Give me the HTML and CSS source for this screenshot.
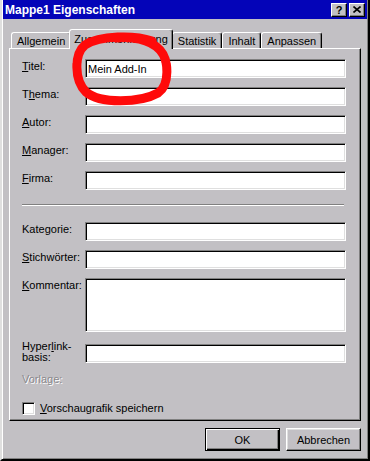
FILE: index.html
```html
<!DOCTYPE html>
<html lang="de">
<head>
    <meta charset="UTF-8">
    <meta name="viewport" content="width=device-width, initial-scale=1.0">
    <title>Mappe1 Eigenschaften</title>
    <link rel="stylesheet" href="styles.css">
</head>
<body>
    <div class="window">
        <div class="titlebar">
            <span class="title">Mappe1 Eigenschaften</span>
            <div class="title-buttons">
                <button class="title-btn">?</button>
                <button class="title-btn">
                    <svg width="8" height="7" viewBox="0 0 8 7"><path d="M0.5 0.5 L7.5 6.5 M7.5 0.5 L0.5 6.5" stroke="#000" stroke-width="1.6" fill="none"/></svg>
                </button>
            </div>
        </div>
        <div class="dialog-body">
            <div class="tabs">
                <div class="tab">Allgemein</div>
                <div class="tab active">Zusammenfassung</div>
                <div class="tab">Statistik</div>
                <div class="tab">Inhalt</div>
                <div class="tab">Anpassen</div>
            </div>
            <div class="panel">
                <div class="field">
                    <label for="titel"><u>T</u>itel:</label>
                    <input type="text" id="titel" value="Mein Add-In">
                </div>
                <div class="field">
                    <label for="thema">T<u>h</u>ema:</label>
                    <input type="text" id="thema">
                </div>
                <div class="field">
                    <label for="autor"><u>A</u>utor:</label>
                    <input type="text" id="autor">
                </div>
                <div class="field">
                    <label for="manager"><u>M</u>anager:</label>
                    <input type="text" id="manager">
                </div>
                <div class="field">
                    <label for="firma"><u>F</u>irma:</label>
                    <input type="text" id="firma">
                </div>
                <div class="separator"></div>
                <div class="field">
                    <label for="kategorie">Kate<u>g</u>orie:</label>
                    <input type="text" id="kategorie">
                </div>
                <div class="field">
                    <label for="stichwoerter"><u>S</u>tichwörter:</label>
                    <input type="text" id="stichwoerter">
                </div>
                <div class="field field-big">
                    <label for="kommentar"><u>K</u>ommentar:</label>
                    <textarea id="kommentar"></textarea>
                </div>
                <div class="field">
                    <label for="hyperlink" class="two-lines">Hyper<u>l</u>ink-<br>basis:</label>
                    <input type="text" id="hyperlink">
                </div>
                <div class="disabled-label">Vorlage:</div>
                <label class="checkbox">
                    <span class="box"></span>
                    <span><u>V</u>orschaugrafik speichern</span>
                </label>
            </div>
            <div class="buttons">
                <button class="btn default">OK</button>
                <button class="btn">Abbrechen</button>
            </div>
        </div>
    </div>

    <!-- rote Markierung um den Titel -->
    <svg class="annotation" width="370" height="461" viewBox="0 0 370 461">
        <path d="M152 41 C135 35, 100 35, 85 45 C74 54, 74 80, 86 92 C100 104, 140 103, 158 93 C170 85, 169 60, 160 50 C150 39, 130 36, 116 38"
              fill="none" stroke="#ff0a0a" stroke-width="9" stroke-linecap="round" stroke-linejoin="round"/>
    </svg>
</body>
</html>
```

FILE: styles.css
```css
* {
    box-sizing: border-box;
}
body {
    margin: 0;
    position: relative;
    font-family: "Liberation Sans", Arial, sans-serif;
    font-size: 11px;
    color: #000;
    background-color: #c2c0c4;
}
.window {
    width: 370px;
    height: 461px;
    display: flex;
    flex-direction: column;
    background-color: #c2c0c4;
    border-style: solid;
    border-width: 0 2px 2px 2px;
    border-color: #dfdfdf #000 #000 #dfdfdf;
    padding: 0 1px 1px 1px;
    box-shadow: inset 1px 0 #fff, inset -1px -1px #808080;
}
.titlebar {
    height: 19px;
    flex-shrink: 0;
    display: flex;
    align-items: center;
    justify-content: space-between;
    padding: 0 2px;
    background-color: #0404b8;
}
.title {
    color: #fff;
    font-size: 12px;
    font-weight: bold;
}
.title-buttons {
    display: flex;
    gap: 2px;
}
.title-btn {
    width: 16px;
    height: 14px;
    padding: 0;
    display: flex;
    align-items: center;
    justify-content: center;
    font-family: inherit;
    font-size: 11px;
    font-weight: bold;
    line-height: 12px;
    background-color: #c2c0c4;
    border: 1px solid;
    border-color: #fff #000 #000 #fff;
    box-shadow: inset -1px -1px #808080;
}
.dialog-body {
    flex: 1;
    display: flex;
    flex-direction: column;
    padding: 10px 6px 0 6px;
}
.tabs {
    height: 19px;
    display: flex;
    align-items: flex-end;
    padding-left: 2px;
}
.tab {
    height: 16px;
    padding: 2px 5px 0 5px;
    line-height: 13px;
    white-space: nowrap;
    border: 1px solid;
    border-bottom: 0;
    border-color: #fff #000 transparent #fff;
    border-radius: 3px 3px 0 0;
    box-shadow: inset -1px 0 #808080;
}
.tab.active {
    height: 20px;
    padding: 3px 4px 0 4px;
    margin: 0 -1px -1px -2px;
    position: relative;
    z-index: 1;
    background-color: #c2c0c4;
}
.panel {
    height: 373px;
    flex-shrink: 0;
    padding: 10px 14px 0 12px;
    border: 1px solid;
    border-color: #fff #000 #000 #fff;
    box-shadow: inset -1px -1px #808080;
}
.field {
    display: flex;
    margin-bottom: 9px;
}
.field label {
    width: 63px;
    flex-shrink: 0;
    padding-top: 1px;
    line-height: 13px;
}
.field label.two-lines {
    padding-top: 0;
    margin-top: -3px;
    line-height: 11px;
}
.field input,
.field textarea {
    flex: 1;
    height: 19px;
    margin: 0;
    padding: 0 2px;
    font-family: inherit;
    font-size: 11px;
    color: #000;
    background-color: #fff;
    border: 1px solid;
    border-color: #808080 #fff #fff #808080;
    box-shadow: inset 1px 1px #000, inset -1px -1px #dfdfdf;
    outline: none;
}
.field-big {
    margin-bottom: 12px;
}
.field textarea {
    height: 54px;
    resize: none;
}
.separator {
    height: 2px;
    margin: 14px 2px 16px 0;
    border-top: 1px solid #808080;
    border-bottom: 1px solid #fff;
}
.disabled-label {
    margin-top: 10px;
    line-height: 13px;
    color: #8a888c;
    text-shadow: 1px 1px #fff;
}
.checkbox {
    display: flex;
    align-items: center;
    gap: 5px;
    margin-top: 16px;
    line-height: 13px;
}
.checkbox .box {
    width: 13px;
    height: 13px;
    background-color: #fff;
    border: 1px solid;
    border-color: #808080 #fff #fff #808080;
    box-shadow: inset 1px 1px #000, inset -1px -1px #dfdfdf;
}
.buttons {
    display: flex;
    justify-content: flex-end;
    gap: 6px;
    margin-top: 7px;
}
.btn {
    width: 75px;
    height: 23px;
    padding: 0;
    font-family: inherit;
    font-size: 11px;
    color: #000;
    background-color: #c2c0c4;
    border: 1px solid;
    border-color: #fff #000 #000 #fff;
    box-shadow: inset -1px -1px #808080, inset 1px 1px #dfdfdf;
}
.btn.default {
    border-color: #000;
    box-shadow: inset 1px 1px #fff, inset -1px -1px #000, inset -2px -2px #808080;
}
.annotation {
    position: absolute;
    top: 0;
    left: 0;
    z-index: 2;
    pointer-events: none;
}
```
